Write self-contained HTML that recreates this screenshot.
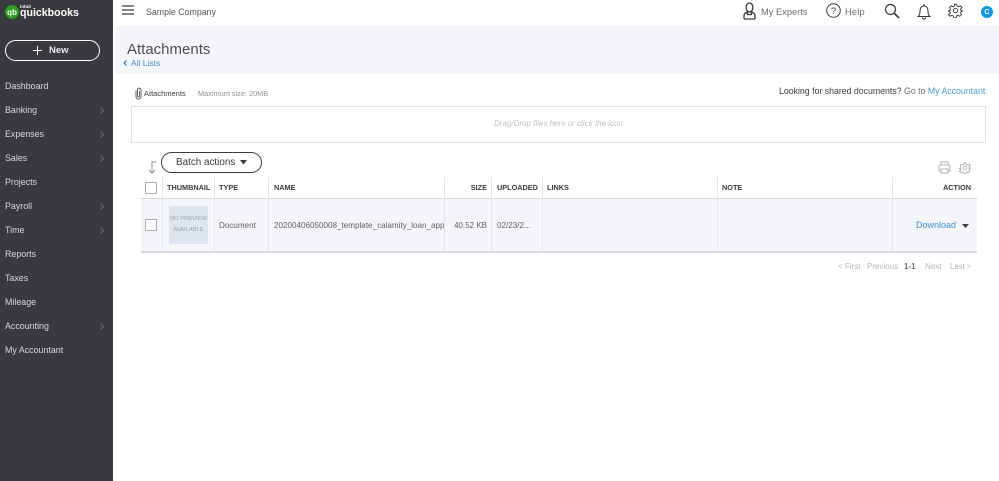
<!DOCTYPE html>
<html>
<head>
<meta charset="utf-8">
<style>
html,body{margin:0;padding:0;width:999px;height:481px;overflow:hidden;background:#fff;font-family:"Liberation Sans",sans-serif;color:#393a3d}
body{position:relative;filter:blur(.3px)}
.a{position:absolute;white-space:nowrap;line-height:12px}
.side{position:absolute;left:0;top:0;width:113px;height:481px;background:#393a3d}
.nav{position:absolute;left:5px;color:#d4d7dc;font-size:8.9px;line-height:12px;white-space:nowrap}
.chev{position:absolute;left:100px;width:4px;height:7px}
.th{position:absolute;top:182px;font-size:7.300px;font-weight:bold;line-height:11px;color:#393a3d;white-space:nowrap}
.td{position:absolute;top:220px;font-size:8.100px;line-height:12px;color:#5f6166;white-space:nowrap}
.v{position:absolute;width:1px;background:#e3e5e8}
.cb{position:absolute;left:145px;width:10px;height:10px;border:1px solid #a9acb1;background:#fff;border-radius:1px}
.pg{position:absolute;top:261px;font-size:8px;line-height:11px;color:#b0b3b8;white-space:nowrap}
</style>
</head>
<body>
<div class="side"></div>
<svg style="position:absolute;left:5px;top:5px" width="14" height="14" viewBox="0 0 14 14"><circle cx="7" cy="7" r="7" fill="#2ca01c"/><text x="7" y="9.800" font-size="8" font-weight="bold" text-anchor="middle" fill="#fff" font-family="Liberation Sans">qb</text></svg>
<div class="a" style="left:20px;top:4px;font-size:4.500px;line-height:5px;color:#fff;font-weight:bold">intuit</div>
<div class="a" style="left:20px;top:7px;font-size:10.600px;font-weight:bold;color:#fff">quickbooks</div>

<div style="position:absolute;left:5px;top:40px;width:93px;height:19px;border:1.500px solid #fff;border-radius:11px"></div>
<svg style="position:absolute;left:32px;top:45px" width="11" height="11" viewBox="0 0 11 11"><path d="M5.500 1v9M1 5.500h9" stroke="#fff" stroke-width="1"/></svg>
<div class="a" style="left:49px;top:45px;font-size:9.500px;font-weight:bold;color:#e8e9eb">New</div>

<div class="nav" style="top:80px">Dashboard</div>
<div class="nav" style="top:104px">Banking</div>
<div class="nav" style="top:128px">Expenses</div>
<div class="nav" style="top:152px">Sales</div>
<div class="nav" style="top:176px">Projects</div>
<div class="nav" style="top:200px">Payroll</div>
<div class="nav" style="top:224px">Time</div>
<div class="nav" style="top:248px">Reports</div>
<div class="nav" style="top:272px">Taxes</div>
<div class="nav" style="top:296px">Mileage</div>
<div class="nav" style="top:320px">Accounting</div>
<div class="nav" style="top:344px">My Accountant</div>
<svg class="chev" style="top:107px" viewBox="0 0 4 7"><path d="M.5.5l3 3-3 3" fill="none" stroke="#6b6c72"/></svg>
<svg class="chev" style="top:131px" viewBox="0 0 4 7"><path d="M.5.5l3 3-3 3" fill="none" stroke="#6b6c72"/></svg>
<svg class="chev" style="top:155px" viewBox="0 0 4 7"><path d="M.5.5l3 3-3 3" fill="none" stroke="#6b6c72"/></svg>
<svg class="chev" style="top:203px" viewBox="0 0 4 7"><path d="M.5.5l3 3-3 3" fill="none" stroke="#6b6c72"/></svg>
<svg class="chev" style="top:227px" viewBox="0 0 4 7"><path d="M.5.5l3 3-3 3" fill="none" stroke="#6b6c72"/></svg>
<svg class="chev" style="top:323px" viewBox="0 0 4 7"><path d="M.5.5l3 3-3 3" fill="none" stroke="#6b6c72"/></svg>

<!-- top bar -->
<svg style="position:absolute;left:122px;top:5px" width="12" height="10" viewBox="0 0 12 10"><path d="M0 1h12M0 5h12M0 9h12" stroke="#393a3d" stroke-width="1.300"/></svg>
<div class="a" style="left:146px;top:6px;font-size:8.800px;color:#55575b">Sample Company</div>

<svg style="position:absolute;left:743px;top:2px" width="13" height="18" viewBox="0 0 13 18" fill="none" stroke="#393a3d" stroke-width="1.300"><ellipse cx="6.500" cy="5.500" rx="3.400" ry="4.500"/><path d="M1 17v-3.500c0-2 2-3 3.500-3.500M12 17v-3.500c0-2-2-3-3.500-3.500M1 17h11M4.500 10v2.500h4V10"/></svg>
<div class="a" style="left:761px;top:6px;font-size:9.300px;color:#6b6c72">My Experts</div>
<svg style="position:absolute;left:826px;top:3px" width="15" height="15" viewBox="0 0 15 15"><circle cx="7.500" cy="7.500" r="6.800" fill="none" stroke="#393a3d" stroke-width="1"/><text x="7.500" y="11" font-size="9.500" text-anchor="middle" fill="#393a3d" font-family="Liberation Sans">?</text></svg>
<div class="a" style="left:845px;top:6px;font-size:9.300px;color:#6b6c72;letter-spacing:.2px">Help</div>
<svg style="position:absolute;left:884px;top:3px" width="16" height="16" viewBox="0 0 16 16" fill="none" stroke="#393a3d"><circle cx="6.500" cy="6.500" r="5" stroke-width="1.200"/><path d="M10 10l5 5" stroke-width="1.600"/></svg>
<svg style="position:absolute;left:917px;top:3px" width="14" height="17" viewBox="0 0 14 17" fill="none" stroke="#393a3d" stroke-width="1.100"><path d="M1 13.500c1.500-1.500 2-2.500 2-5.500 0-3 1.500-5 4-5s4 2 4 5c0 3 .5 4 2 5.500zM7 1v2M5.500 14.500c0 2 3 2 3 0"/></svg>
<svg style="position:absolute;left:948px;top:3px" width="15" height="15" viewBox="0 0 24 24" fill="none" stroke="#393a3d" stroke-width="1.500"><circle cx="12" cy="12" r="3.500"/><path d="M10 2h4l.7 3 2.300 1 2.700-1.600 2.800 2.800L20 9.900l1 2.100 3 .7v0l-3 .9-1 2.300 1.600 2.600-2.800 2.800-2.700-1.600-2.300 1-.7 3h-4l-.7-3-2.300-1-2.700 1.600-2.800-2.800L4 15.900 3 13.600l-3-.9v0l3-.7 1-2.100L2.500 7.200l2.800-2.800L8 6l2.300-1z"/></svg>
<div style="position:absolute;left:981px;top:6px;width:12px;height:12px;border-radius:50%;background:#0d96e8;color:#fff;font-size:7.500px;font-weight:bold;line-height:12px;text-align:center">C</div>

<!-- header band -->
<div style="position:absolute;left:115px;top:26px;width:884px;height:48px;background:#f4f5f8"></div>
<div class="a" style="left:127px;top:41px;font-size:15px;line-height:18px;color:#4c4e52">Attachments</div>
<svg style="position:absolute;left:123px;top:60px" width="4" height="6" viewBox="0 0 4 6"><path d="M3.500.5L1 3l2.500 2.500" fill="none" stroke="#2b60b5" stroke-width="1"/></svg>
<div class="a" style="left:131px;top:57px;font-size:8.500px;color:#4a90d6">All Lists</div>

<!-- attachments row -->
<svg style="position:absolute;left:134px;top:87px" width="9" height="13" viewBox="0 0 9 13" fill="none" stroke="#55575b" stroke-width=".9"><path d="M2 3.500v6c0 3.500 5 3.500 5 0V3c0-2.500-3.500-2.500-3.500 0v6c0 1.300 2 1.300 2 0V4"/></svg>
<div class="a" style="left:144px;top:88px;font-size:7.500px;color:#393a3d">Attachments</div>
<div class="a" style="left:198px;top:88px;font-size:7.350px;color:#8d9096">Maximum size: 20MB</div>
<div class="a" style="left:779px;top:85px;font-size:8.750px;color:#393a3d">Looking for shared documents? <span style="color:#6b6c72">Go to</span> <span style="color:#4a9ad9">My Accountant</span></div>

<!-- drop zone -->
<div style="position:absolute;left:131px;top:106px;width:853px;height:35px;border:1px solid #dfe1e4"></div>
<div class="a" style="left:131px;width:855px;top:118px;font-size:8px;font-style:italic;color:#bcbfc4;text-align:center">Drag/Drop files here or click the icon</div>

<!-- batch -->
<svg style="position:absolute;left:146px;top:161px" width="11" height="13" viewBox="0 0 11 13" fill="none" stroke="#8d9096" stroke-width="1"><path d="M10.500 1H6v11M3 9l3 3 3-3"/></svg>
<div style="position:absolute;left:161px;top:152px;width:99px;height:19px;border:1px solid #393a3d;border-radius:11px"></div>
<div class="a" style="left:176px;top:157px;font-size:9.900px;color:#393a3d">Batch actions</div>
<svg style="position:absolute;left:240px;top:160px" width="8" height="5" viewBox="0 0 8 5"><path d="M0 0h7L3.500 4.500z" fill="#393a3d"/></svg>

<svg style="position:absolute;left:938px;top:161px" width="13" height="13" viewBox="0 0 13 13" fill="none" stroke="#a9acb1" stroke-width="1"><path d="M3 4V1h7v3M3 10H1V5.500C1 4.800 1.500 4 2 4h9c.5 0 1 .8 1 1.500V10h-2"/><path d="M3 8h7v4H3z"/></svg>
<svg style="position:absolute;left:959px;top:162px" width="12" height="12" viewBox="0 0 24 24" fill="none" stroke="#a9acb1" stroke-width="1.800"><circle cx="12" cy="12" r="3.500"/><path d="M10 2h4l.7 3 2.300 1 2.700-1.600 2.800 2.800L20 9.900l1 2.100 3 .7v0l-3 .9-1 2.300 1.600 2.600-2.800 2.800-2.700-1.600-2.300 1-.7 3h-4l-.7-3-2.300-1-2.700 1.600-2.800-2.800L4 15.900 3 13.600l-3-.9v0l3-.7 1-2.100L2.500 7.200l2.800-2.800L8 6l2.300-1z"/></svg>

<!-- table -->
<div style="position:absolute;left:141px;top:198px;width:836px;height:54px;background:#f4f5f8"></div>
<div style="position:absolute;left:141px;top:198px;width:836px;height:1px;background:#d4d7dc"></div>
<div style="position:absolute;left:141px;top:251px;width:836px;height:2px;background:#d4d7dc"></div>

<div class="v" style="left:162px;top:177px;height:75px"></div>
<div class="v" style="left:214px;top:177px;height:75px"></div>
<div class="v" style="left:268px;top:177px;height:75px"></div>
<div class="v" style="left:444px;top:177px;height:75px"></div>
<div class="v" style="left:491px;top:177px;height:75px"></div>
<div class="v" style="left:542px;top:177px;height:75px"></div>
<div class="v" style="left:717px;top:177px;height:75px"></div>
<div class="v" style="left:892px;top:177px;height:75px"></div>

<div class="cb" style="top:182px"></div>
<div class="cb" style="top:219px"></div>

<div class="th" style="left:167px">THUMBNAIL</div>
<div class="th" style="left:219px">TYPE</div>
<div class="th" style="left:274px">NAME</div>
<div class="th" style="right:512px">SIZE</div>
<div class="th" style="left:497px">UPLOADED</div>
<div class="th" style="left:547px">LINKS</div>
<div class="th" style="left:722px">NOTE</div>
<div class="th" style="right:28px">ACTION</div>

<div style="position:absolute;left:169px;top:206px;width:39px;height:38px;background:#dfe5ee"></div>
<div class="a" style="left:169px;width:39px;top:214px;font-size:5.800px;line-height:11px;color:#9aa3ad;text-align:center">NO PREVIEW<br>AVAILABLE</div>

<div class="td" style="left:219px">Document</div>
<div class="td" style="left:274px;width:170px;overflow:hidden">20200406050008_template_calamity_loan_application.pdf</div>
<div class="td" style="right:512px;font-size:8px">40.52 KB</div>
<div class="td" style="left:497px">02/23/2...</div>
<div class="a" style="left:916px;top:219px;font-size:9px;color:#3b8fd0">Download</div>
<svg style="position:absolute;left:962px;top:224px" width="7" height="4" viewBox="0 0 7 4"><path d="M0 0h7L3.500 4z" fill="#393a3d"/></svg>

<div class="pg" style="left:838px">&lt; First</div>
<div class="pg" style="left:867px">Previous</div>
<div class="pg" style="left:904px;color:#6b6c72;font-weight:bold">1-1</div>
<div class="pg" style="left:925px">Next</div>
<div class="pg" style="left:950px;font-size:7.800px">Last &gt;</div>
</body>
</html>
